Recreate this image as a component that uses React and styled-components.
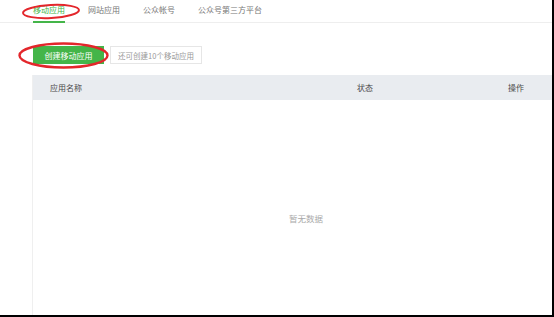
import React from "react";
import styled, { createGlobalStyle } from "styled-components";

const Global = createGlobalStyle`
  html, body { margin: 0; padding: 0; background: #fff; }
  body { font-family: "Noto Sans CJK SC", "Noto Sans", sans-serif; }
  * { box-sizing: border-box; }
`;

const Frame = styled.div`
  position: relative;
  width: 554px;
  height: 317px;
  border-right: 2px solid #000;
  border-bottom: 2px solid #000;
  background: #fff;
  display: flex;
  flex-direction: column;
  overflow: hidden;
`;

const TabBar = styled.div`
  height: 23px;
  border-bottom: 1px solid #eeeeee;
  display: flex;
  align-items: stretch;
  gap: 23px;
  padding-left: 33px;
`;

const Tab = styled.div`
  font-size: 8px;
  line-height: 1;
  padding-top: 6px;
  color: ${(p) => (p.$active ? "#44b549" : "#777")};
  border-bottom: 2px solid ${(p) => (p.$active ? "#44b549" : "transparent")};
  margin-bottom: -1px;
`;

const Toolbar = styled.div`
  display: flex;
  gap: 6px;
  padding: 23px 0 0 33px;
`;

const CreateButton = styled.div`
  width: 71px;
  height: 18px;
  background: #44b549;
  color: #fff;
  font-size: 8px;
  display: flex;
  align-items: center;
  justify-content: center;
`;

const InfoBox = styled.div`
  width: 92px;
  height: 18px;
  border: 1px solid #e6e6e6;
  color: #999;
  font-size: 7.5px;
  display: flex;
  align-items: center;
  justify-content: center;
`;

const Table = styled.div`
  margin: 11px 0 0 32px;
  flex: 1;
  border-left: 1px solid #efefef;
  display: flex;
  flex-direction: column;
`;

const HeaderRow = styled.div`
  height: 25px;
  background: #e9ecf0;
  display: grid;
  grid-template-columns: 307px 151px 1fr;
  align-items: center;
  padding-left: 17px;
  font-size: 8px;
  color: #4a4a4a;
`;

const Empty = styled.div`
  flex: 1;
  padding: 112px 0 0 27px;
  text-align: center;
  font-size: 8.5px;
  color: #aaa;
`;

const Annotations = styled.svg`
  position: absolute;
  left: 0;
  top: 0;
  pointer-events: none;
`;

export default function App() {
  return (
    <>
      <Global />
      <Frame>
        <TabBar>
          <Tab $active>移动应用</Tab>
          <Tab>网站应用</Tab>
          <Tab>公众帐号</Tab>
          <Tab>公众号第三方平台</Tab>
        </TabBar>
        <Toolbar>
          <CreateButton>创建移动应用</CreateButton>
          <InfoBox>还可创建10个移动应用</InfoBox>
        </Toolbar>
        <Table>
          <HeaderRow>
            <span>应用名称</span>
            <span>状态</span>
            <span>操作</span>
          </HeaderRow>
          <Empty>暂无数据</Empty>
        </Table>
        <Annotations width="554" height="317" viewBox="0 0 554 317">
          <ellipse cx="51" cy="11.5" rx="28" ry="6.5" fill="none" stroke="#e3262b" strokeWidth="2" transform="rotate(-3 51 11.5)" />
          <ellipse cx="63.5" cy="55.5" rx="44" ry="12" fill="none" stroke="#e3262b" strokeWidth="2.4" />
        </Annotations>
      </Frame>
    </>
  );
}
